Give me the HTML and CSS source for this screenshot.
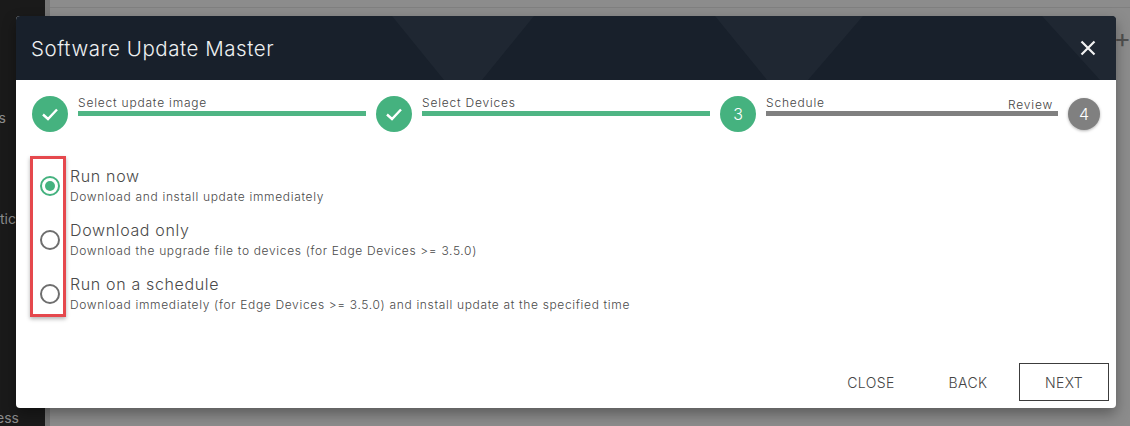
FILE: index.html
```html
<!DOCTYPE html>
<html lang="en">
<head>
    <meta charset="UTF-8" />
    <title>Software Update Master</title>
    <link rel="stylesheet" href="styles.css">
</head>
<body>
    <aside class="sidebar">
        <span class="side-item side-s">s</span>
        <span class="side-item side-tic">tic</span>
        <span class="side-item side-ess">ess</span>
    </aside>
    <main class="backdrop">
        <div class="backdrop-line"></div>
        <div class="backdrop-plus">+</div>
    </main>

    <div class="modal">
        <header class="modal-header">
            <svg class="header-pattern" viewBox="0 0 1100 64" width="1100" height="64">
                <path d="M376 0 H518 L466 64 H428 Z M699 0 H847 L792 64 H751 Z M1026 0 H1100 V64 H1084 Z" fill="#1f2732" />
            </svg>
            <h1>Software Update Master</h1>
            <svg class="close-icon" viewBox="0 0 16 16" width="16" height="16">
                <path d="M1.5 1.5 L14.5 14.5 M14.5 1.5 L1.5 14.5" stroke="#f2f2f2" stroke-width="2.2" fill="none" />
            </svg>
        </header>

        <div class="stepper">
            <div class="step-circle done">
                <svg viewBox="0 0 20 20" width="20" height="20"><path d="M3 10.5 L8 15 L17 5.5" stroke="#fff" stroke-width="2.4" fill="none" /></svg>
            </div>
            <div class="step-body">
                <div class="step-label">Select update image</div>
                <div class="step-bar"></div>
            </div>
            <div class="step-circle done">
                <svg viewBox="0 0 20 20" width="20" height="20"><path d="M3 10.5 L8 15 L17 5.5" stroke="#fff" stroke-width="2.4" fill="none" /></svg>
            </div>
            <div class="step-body">
                <div class="step-label">Select Devices</div>
                <div class="step-bar"></div>
            </div>
            <div class="step-circle done">3</div>
            <div class="step-body step-body-last">
                <div class="step-label-row">
                    <span class="step-label">Schedule</span>
                    <span class="step-label step-label-end">Review</span>
                </div>
                <div class="step-bar todo"></div>
            </div>
            <div class="step-circle todo-circle">4</div>
        </div>

        <div class="options">
            <div class="option">
                <span class="radio checked"></span>
                <div>
                    <div class="option-title">Run now</div>
                    <div class="option-desc">Download and install update immediately</div>
                </div>
            </div>
            <div class="option">
                <span class="radio"></span>
                <div>
                    <div class="option-title">Download only</div>
                    <div class="option-desc">Download the upgrade file to devices (for Edge Devices &gt;= 3.5.0)</div>
                </div>
            </div>
            <div class="option">
                <span class="radio"></span>
                <div>
                    <div class="option-title">Run on a schedule</div>
                    <div class="option-desc">Download immediately (for Edge Devices &gt;= 3.5.0) and install update at the specified time</div>
                </div>
            </div>
            <div class="highlight"></div>
        </div>

        <footer class="modal-footer">
            <button class="btn btn-close">CLOSE</button>
            <button class="btn btn-back">BACK</button>
            <button class="btn btn-next">NEXT</button>
        </footer>
    </div>
</body>
</html>
```

FILE: styles.css
```css
* {
    box-sizing: border-box;
}

html, body {
    height: 100%;
}

body {
    margin: 0;
    display: flex;
    overflow: hidden;
    font-family: 'Inter', 'Noto Sans', sans-serif;
    background: #8a8a8a;
}

.sidebar {
    position: relative;
    flex: 0 0 45px;
    background: #1a1a1a;
    color: #8c8c8c;
    font-size: 14px;
}

.side-item {
    position: absolute;
    white-space: nowrap;
}

.side-s { top: 109px; right: 39px; }
.side-tic { top: 210px; right: 29px; }
.side-ess { top: 409px; right: 26px; }

.backdrop {
    position: relative;
    flex: 1;
    background: #8c8c8c;
    border-left: 5px solid #777;
}

.backdrop-line {
    margin-top: 7px;
    border-top: 1px solid #808080;
}

.backdrop-plus {
    position: absolute;
    top: 22px;
    right: -1px;
    color: #505050;
    font-size: 26px;
    font-weight: 400;
}

.modal {
    position: absolute;
    top: 16px;
    left: 16px;
    width: 1100px;
    height: 392px;
    display: flex;
    flex-direction: column;
    background: #fff;
    border-radius: 4px;
    overflow: hidden;
    box-shadow: 0 6px 14px rgba(0,0,0,0.35);
}

.modal-header {
    position: relative;
    flex: 0 0 64px;
    display: flex;
    justify-content: space-between;
    align-items: center;
    padding: 0 20px 0 15px;
    color: #eef0f2;
    background: #18202b;
}

.header-pattern {
    position: absolute;
    top: 0;
    left: 0;
}

.modal-header h1 {
    position: relative;
    margin: 0;
    font-size: 20.5px;
    font-weight: 300;
    letter-spacing: 0.55px;
}

.close-icon {
    position: relative;
    display: block;
}

.stepper {
    display: flex;
    align-items: flex-start;
    padding: 16px 16px 0;
}

.step-circle {
    flex: 0 0 36px;
    height: 36px;
    display: flex;
    align-items: center;
    justify-content: center;
    border-radius: 50%;
    font-size: 16px;
    font-weight: 300;
    color: #fff;
}

.step-circle.done {
    background: #45b27f;
}

.step-circle.todo-circle {
    flex: 0 0 32px;
    height: 32px;
    margin: 2px 0 0 10px;
    background: #808080;
    box-shadow: 0 1px 3px rgba(0,0,0,0.3);
}

.step-body {
    flex: 0 0 288px;
    margin: 0 10px;
}

.step-body-last {
    flex: 1;
    margin-right: 0;
}

.step-label {
    height: 15px;
    font-size: 12px;
    font-weight: 300;
    line-height: 13px;
    color: #444;
    letter-spacing: 0.8px;
}

.step-label-row {
    display: flex;
    justify-content: space-between;
    padding-right: 5px;
}

.step-label-end {
    position: relative;
    top: 2px;
}

.step-bar {
    height: 5px;
    background: #4fb584;
}

.step-bar.todo {
    background: #808080;
}

.options {
    position: relative;
    padding: 37px 24px 0 24px;
}

.option {
    display: flex;
    align-items: flex-start;
    height: 54px;
    gap: 10px;
}

.radio {
    flex: 0 0 20px;
    height: 20px;
    margin-top: 7px;
    border: 2px solid #6e6e6e;
    border-radius: 50%;
}

.radio.checked {
    border-color: #45b27f;
    display: flex;
    align-items: center;
    justify-content: center;
}

.radio.checked::after {
    content: "";
    width: 10px;
    height: 10px;
    border-radius: 50%;
    background: #45b27f;
}

.option-title {
    margin-top: -3px;
    font-size: 16px;
    font-weight: 300;
    line-height: 20px;
    color: #4a4a4a;
    letter-spacing: 0.65px;
}

.option-desc {
    margin-top: 3px;
    font-size: 12px;
    font-weight: 300;
    line-height: 16px;
    color: #4a4a4a;
    letter-spacing: 0.66px;
}

.highlight {
    position: absolute;
    top: 24px;
    left: 14px;
    width: 36px;
    height: 161px;
    border: 3px solid #e5484d;
    box-shadow: 0 2px 4px rgba(0,0,0,0.3);
}

.modal-footer {
    margin-top: auto;
    display: flex;
    justify-content: flex-end;
    align-items: center;
    padding: 0 7px 7px 0;
}

.btn {
    height: 38px;
    padding: 0;
    background: none;
    border: none;
    font-family: inherit;
    font-size: 14px;
    font-weight: 300;
    color: #444;
    letter-spacing: 0.4px;
}

.btn-close {
    width: 50px;
    margin-right: 50px;
}

.btn-back {
    width: 44px;
    margin-right: 29px;
}

.btn-next {
    width: 90px;
    border: 1px solid #3c3c3c;
}
```
